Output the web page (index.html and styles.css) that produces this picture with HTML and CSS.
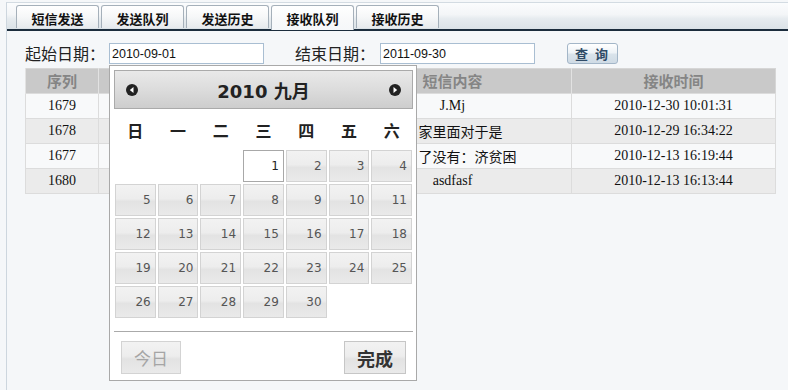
FILE: index.html
```html
<!DOCTYPE html>
<html>
<head>
  <meta charset="utf-8">
  <title>接收队列</title>
  <link rel="stylesheet" href="styles.css">
</head>
<body>
  <div class="frame">
    <ul class="tabs">
      <li class="tab">短信发送</li>
      <li class="tab">发送队列</li>
      <li class="tab">发送历史</li>
      <li class="tab active">接收队列</li>
      <li class="tab">接收历史</li>
    </ul>

    <div class="panel">
      <div class="search">
        <label class="field-label" for="start-date">起始日期：</label>
        <span class="date-wrap">
          <input type="text" id="start-date" class="date-input" value="2010-09-01">

          <div class="datepicker">
            <div class="dp-header">
              <span class="dp-nav">
                <svg width="12" height="12" viewBox="0 0 12 12"><circle cx="6" cy="6" r="6" fill="#222"/><path d="M7.5 3 L3.8 6 L7.5 9 Z" fill="#fff"/></svg>
              </span>
              <span class="dp-title">2010 九月</span>
              <span class="dp-nav">
                <svg width="12" height="12" viewBox="0 0 12 12"><circle cx="6" cy="6" r="6" fill="#222"/><path d="M4.5 3 L8.2 6 L4.5 9 Z" fill="#fff"/></svg>
              </span>
            </div>

            <div class="dp-weekdays">
              <span>日</span><span>一</span><span>二</span><span>三</span><span>四</span><span>五</span><span>六</span>
            </div>

            <div class="dp-days" id="dp-days"></div>

            <div class="dp-footer">
              <button type="button" class="dp-btn dp-today">今日</button>
              <button type="button" class="dp-btn dp-done">完成</button>
            </div>
          </div>
        </span>

        <label class="field-label second" for="end-date">结束日期：</label>
        <input type="text" id="end-date" class="date-input" value="2011-09-30">

        <button type="button" class="query-btn">查 询</button>
      </div>

      <table class="list">
        <colgroup>
          <col class="col-id">
          <col class="col-phone">
          <col class="col-content">
          <col class="col-time">
        </colgroup>
        <tr>
          <th>序列</th>
          <th></th>
          <th>短信内容</th>
          <th>接收时间</th>
        </tr>
        <tr>
          <td>1679</td>
          <td></td>
          <td>J.Mj</td>
          <td>2010-12-30 10:01:31</td>
        </tr>
        <tr class="alt">
          <td>1678</td>
          <td></td>
          <td class="long-6">家里面对于是</td>
          <td>2010-12-29 16:34:22</td>
        </tr>
        <tr>
          <td>1677</td>
          <td></td>
          <td class="long-7">了没有：济贫困</td>
          <td>2010-12-13 16:19:44</td>
        </tr>
        <tr class="alt">
          <td>1680</td>
          <td></td>
          <td>asdfasf</td>
          <td>2010-12-13 16:13:44</td>
        </tr>
      </table>
    </div>
  </div>

  <script>
    // September 2010 starts on a Wednesday
    var days = document.getElementById('dp-days');
    var firstDay = 3;
    var total = 30;
    for (var i = 0; i < firstDay; i++) {
      var blank = document.createElement('span');
      blank.className = 'dp-blank';
      days.appendChild(blank);
    }
    for (var d = 1; d <= total; d++) {
      var cell = document.createElement('a');
      cell.className = d === 1 ? 'dp-day current' : 'dp-day';
      cell.textContent = d;
      days.appendChild(cell);
    }
  </script>
</body>
</html>
```

FILE: styles.css
```css
body {
  margin: 0;
  background-color: #f5f7f9;
  font-family: "Liberation Sans", "Noto Sans CJK SC", sans-serif;
  color: #222;
}

.frame {
  margin: 2px 0 0 6px;
  border-top: 1px solid #d3dbe2;
  border-left: 1px solid #cdd6de;
  height: 387px;
}

/* tab strip */
.tabs {
  display: flex;
  margin: 0;
  padding: 2px 0 0 9px;
  height: 24px;
  list-style: none;
  background: linear-gradient(#fbfcfd 0%, #f3f5f7 45%, #e6ebef 60%, #dbe2e7 100%);
  border-bottom: 2px solid #1b2c3c;
}

.tab {
  width: 81px;
  height: 22px;
  margin-right: 2px;
  border: 1px solid #a5b0ba;
  border-bottom: none;
  border-radius: 3px 3px 0 0;
  background: linear-gradient(#ffffff 0%, #f6f7f8 50%, #e6eaed 100%);
  font-family: "Noto Sans CJK SC", sans-serif;
  font-size: 13px;
  font-weight: bold;
  line-height: 25px;
  text-align: center;
  color: #111;
}

.tab.active {
  height: 24px;
  margin-bottom: -2px;
  background: linear-gradient(#ffffff 0%, #f8f9fa 60%, #f5f7f9 100%);
}

/* search row */
.panel {
  padding-left: 18px;
}

.search {
  display: flex;
  align-items: center;
  height: 21px;
  margin-top: 12px;
}

.field-label {
  width: 80px;
  margin-right: 4px;
  font-family: "Noto Sans CJK SC", sans-serif;
  font-size: 16px;
  line-height: 21px;
  color: #222;
}

.field-label.second {
  margin-left: 31px;
  margin-right: 5px;
}

.date-wrap {
  position: relative;
  display: flex;
}

.date-input {
  box-sizing: border-box;
  width: 155px;
  height: 21px;
  margin: 0;
  padding: 0 2px;
  border: 1px solid #a9bed2;
  background: #fff;
  font-family: "Liberation Sans", sans-serif;
  font-size: 12.5px;
  color: #111;
}

.query-btn {
  box-sizing: border-box;
  width: 51px;
  height: 21px;
  margin-left: 32px;
  padding: 0;
  border: 1px solid #a3b6c8;
  border-radius: 3px;
  background: linear-gradient(#ffffff 0%, #eef3f7 45%, #d9e3eb 55%, #cfdbe5 100%);
  font-family: "Noto Sans CJK SC", sans-serif;
  font-size: 13px;
  font-weight: bold;
  letter-spacing: 2px;
  color: #2f4b67;
}

/* result table */
.list {
  margin-top: 4px;
  width: 750px;
  border-collapse: collapse;
  table-layout: fixed;
  border: 1px solid #d6d6d6;
  font-family: "Liberation Serif", "Noto Sans CJK SC", serif;
  font-size: 14px;
}

.col-id { width: 73px; }
.col-phone { width: 235px; }
.col-content { width: 238px; }
.col-time { width: 204px; }

.list th {
  height: 24px;
  padding: 0;
  background-color: #c9c9c9;
  border-left: 1px solid #e2e2e2;
  font-family: "Noto Sans CJK SC", sans-serif;
  font-size: 15px;
  font-weight: bold;
  color: #858585;
  line-height: 24px;
}

.list td {
  height: 24px;
  padding: 0;
  border: 1px solid #dcdcdc;
  background-color: #f8f9fa;
  text-align: center;
  white-space: nowrap;
  overflow: hidden;
  color: #111;
}

.list td.long-6 {
  padding-left: 16px;
}

.list td.long-7 {
  padding-left: 30px;
}

.list tr.alt td {
  background-color: #ebebeb;
}

/* date picker popup */
.datepicker {
  position: absolute;
  top: 22px;
  left: 0;
  z-index: 10;
  box-sizing: border-box;
  width: 308px;
  padding: 4px 3px 6px 4px;
  border: 1px solid #a9a9a9;
  background: #fff;
}

.dp-header {
  display: flex;
  align-items: center;
  justify-content: space-between;
  box-sizing: border-box;
  height: 39px;
  padding: 0 11px 0 11px;
  border: 1px solid #aaaaaa;
  background: linear-gradient(#e9e9e9 0%, #dcdcdc 50%, #cdcdcd 100%);
}

.dp-nav {
  display: flex;
}

.dp-title {
  font-family: "DejaVu Sans", "Noto Sans CJK SC", sans-serif;
  font-size: 18px;
  font-weight: bold;
  color: #222;
}

.dp-weekdays {
  display: grid;
  grid-template-columns: repeat(7, 1fr);
  gap: 2px;
  width: 297px;
  height: 41px;
  margin-left: 1px;
  align-items: center;
  font-family: "Noto Sans CJK SC", sans-serif;
  font-size: 16px;
  font-weight: bold;
  text-align: center;
  color: #222;
}

.dp-days {
  display: grid;
  grid-template-columns: repeat(7, 1fr);
  grid-auto-rows: 32px;
  gap: 2px;
  width: 297px;
  margin-left: 1px;
}

.dp-day {
  display: flex;
  align-items: center;
  justify-content: flex-end;
  padding-right: 4px;
  border: 1px solid #d3d3d3;
  background: linear-gradient(#f2f2f2 0%, #ededed 45%, #e3e3e3 55%, #eaeaea 100%);
  font-family: "DejaVu Sans", sans-serif;
  font-size: 12px;
  color: #555;
}

.dp-day.current {
  border-color: #a8a8a8;
  background: #fff;
  color: #222;
}

.dp-footer {
  display: flex;
  justify-content: space-between;
  margin-top: 13px;
  padding: 9px 7px 0 7px;
  border-top: 1px solid #aaaaaa;
}

.dp-btn {
  box-sizing: border-box;
  height: 33px;
  padding: 0;
  border: 1px solid #d3d3d3;
  background: linear-gradient(#f2f2f2 0%, #ededed 45%, #e3e3e3 55%, #eaeaea 100%);
  font-family: "Noto Sans CJK SC", sans-serif;
  font-size: 17px;
}

.dp-today {
  width: 60px;
  color: #a5a5a5;
}

.dp-done {
  width: 62px;
  border-color: #c6c6c6;
  font-size: 18px;
  font-weight: bold;
  color: #333;
}
```
